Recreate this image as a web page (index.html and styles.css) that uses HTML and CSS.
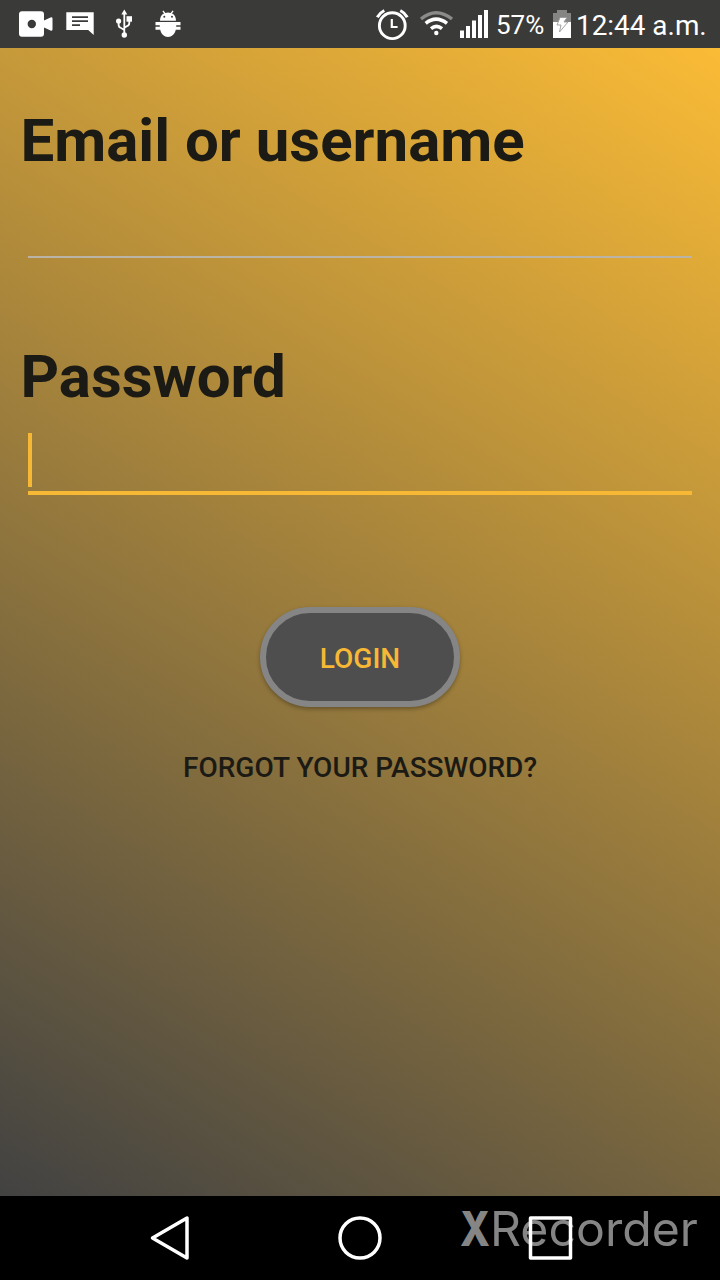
FILE: index.html
```html
<!DOCTYPE html>
<html lang="en">
<head>
<meta charset="utf-8">
<title>Login</title>
<link rel="stylesheet" href="styles.css">
</head>
<body>
<div class="phone">
  <header class="status">
    <svg class="notifications" width="200" height="48" viewBox="0 0 200 48" fill="#fff">
      <path fill-rule="evenodd" d="M22 11.300h19a3 3 0 0 1 3 3v6.200l6.500-3q2-.8 2 1.200v10.600q0 2-2 1.200l-6.500-3v6.200a3 3 0 0 1-3 3H22a3 3 0 0 1-3-3V14.300a3 3 0 0 1 3-3zM31.800 19.800a4.200 4.200 0 1 0 0 8.400 4.200 4.200 0 1 0 0-8.400z"/>
      <path fill-rule="evenodd" d="M66.300 12.200h27.400V35l-5.500-5H66.300zM72 16.300v1.600h16v-1.600zM72 20.300v1.600h16v-1.600zM72 24.300v1.600h8v-1.600z"/>
      <path d="M124.300 9.500l3 5h-6z"/>
      <circle cx="124.300" cy="35" r="2.700"/><circle cx="118.600" cy="21" r="2.600"/><path d="M126.500 16.200h5.500v5.500h-5.500z"/>
      <path d="M124.300 13v22M118.600 21v4q0 2.300 2.500 3l3.200 2M129.300 20v3q0 2.400-2.400 3.200l-2.600 1.500" fill="none" stroke="#fff" stroke-width="1.800"/>
      <path fill-rule="evenodd" d="M160 20.700c0-3.600 1.300-6 4-7.200l-1.600-2.200 1-.8 2 2.400q2.600-.7 5.200 0l2-2.400 1 .8-1.600 2.200c2.700 1.200 4 3.600 4 7.200zM163.300 16.800a1 1 0 1 0 2 0 1 1 0 1 0-2 0M171 16.800a1 1 0 1 0 2 0 1 1 0 1 0-2 0"/>
      <path d="M155.500 22h25v3.300h-4.300v1.500h4.300v3h-4.700c-1 4.500-4 7.200-7.800 7.200s-6.800-2.700-7.800-7.200h-4.700v-3h4.300v-1.500h-4.300z"/>
    </svg>
    <div class="system">
      <svg width="120" height="48" viewBox="374 0 120 48" fill="none" stroke="#fff">
        <circle cx="392.300" cy="25.700" r="12.900" stroke-width="2.900"/>
        <path d="M391.800 19v8h5.800" stroke-width="2.200"/>
        <path d="M377.300 17.200q2.300-4.300 7-6.700M407.300 17.200q-2.300-4.300-7-6.700" stroke-width="3"/>
        <path d="M421 19q15-12.600 31 0" stroke="#8b8b8a" stroke-width="3.500"/>
        <path d="M425.700 23.400q10.300-8.400 21.300 0M431 28.600q5.500-4.400 11 0" stroke-width="3.600"/>
        <circle cx="436.300" cy="33" r="2.200" fill="#fff" stroke="none"/>
        <path d="M460 30.500h4V38h-4zM466 26h4v12h-4zM472 20.500h4V38h-4zM478 15h4v23h-4zM484 10h4v28h-4z" fill="#fff" stroke="none"/>
      </svg>
      <span class="percent">57%</span>
      <svg width="20" height="48" viewBox="552 0 20 48">
        <path d="M553 13h4v-3h10v3h4v9h-18z" fill="#858584"/>
        <path d="M553 22h18v16h-18z" fill="#fff"/>
        <path d="M560 17.500h7l-3 4.500h4l-8.500 10 1.500-7h-4z" fill="#fff" stroke="#999" stroke-width=".9"/>
      </svg>
      <span class="clock">12:44 a.m.</span>
    </div>
  </header>
  <main class="login">
    <label class="label" for="user">Email or username</label>
    <input class="field" id="user" type="text">
    <label class="label label-password" for="password">Password</label>
    <div class="field field-active" id="password"><span class="caret"></span></div>
    <button class="submit">LOGIN</button>
    <a class="forgot">FORGOT YOUR PASSWORD?</a>
  </main>
  <nav class="navigation">
    <svg width="720" height="84" viewBox="0 1196 720 84">
      <text class="brand" y="1245.500"><tspan class="brand-x" x="460" textLength="30" lengthAdjust="spacingAndGlyphs">X</tspan></text>
      <text class="brand" x="490" y="1245.500" textLength="208" lengthAdjust="spacingAndGlyphs">Recorder</text>
      <g fill="none" stroke="#fff" stroke-width="3.500" stroke-linejoin="round">
        <path d="M187 1218v40l-34.500-20z"/>
        <circle cx="360" cy="1238" r="20"/>
        <path d="M530.500 1218h40v40h-40z"/>
      </g>
    </svg>
  </nav>
</div>
</body>
</html>
```
FILE: styles.css
```css
* { box-sizing: border-box; }
body { margin: 0; font-family: Roboto, "Liberation Sans", sans-serif; }
.phone { display: flex; flex-direction: column; width: 720px; height: 1280px; overflow: hidden; }
.status { display: flex; justify-content: space-between; height: 48px; background: #3a3a39; color: #fff; }
.status svg { display: block; flex: none; }
.system { display: flex; width: 346px; line-height: 51px; white-space: nowrap; }
.percent { width: 58px; padding-left: 2px; font-size: 26px; }
.clock { padding-left: 4px; font-size: 27.900px; }
.login {
  display: flex; flex-direction: column; align-items: center; flex: 1;
  padding: 58px 20px 0;
  background: linear-gradient(32.1deg, #424242, #fabb36);
}
.label { align-self: flex-start; height: 70px; padding-left: .5px; color: #1c1a14; font-size: 60px; line-height: 70px; font-weight: 700; }
.label-password { margin-top: 84px; }
.field { width: 664px; height: 82px; padding: 0; border: 0; border-bottom: 2px solid #b9b3a8; background: transparent; outline: 0; font: 36px Roboto, sans-serif; }
.field-active { display: flex; height: 83px; padding-top: 21px; border-bottom: 4px solid #f7b835; }
.caret { width: 4px; height: 54px; background: #f7b835; }
.submit {
  width: 200px; height: 100px; margin-top: 112px; padding: 2px 0 0;
  border: 6px solid #858585; border-radius: 50px; background: #4e4e4e;
  box-shadow: 0 2px 4px rgba(0, 0, 0, .3);
  color: #f7b835; font: 500 28px Roboto, sans-serif;
}
.forgot { margin-top: 44px; color: #1c1a14; font-size: 28px; line-height: 34px; font-weight: 500; }
.navigation { height: 84px; background: #000; }
.navigation svg { display: block; }
.brand { fill: #858585; font-family: Inter, Lato, sans-serif; font-size: 48px; }
.brand-x { font-weight: 800; }
```
